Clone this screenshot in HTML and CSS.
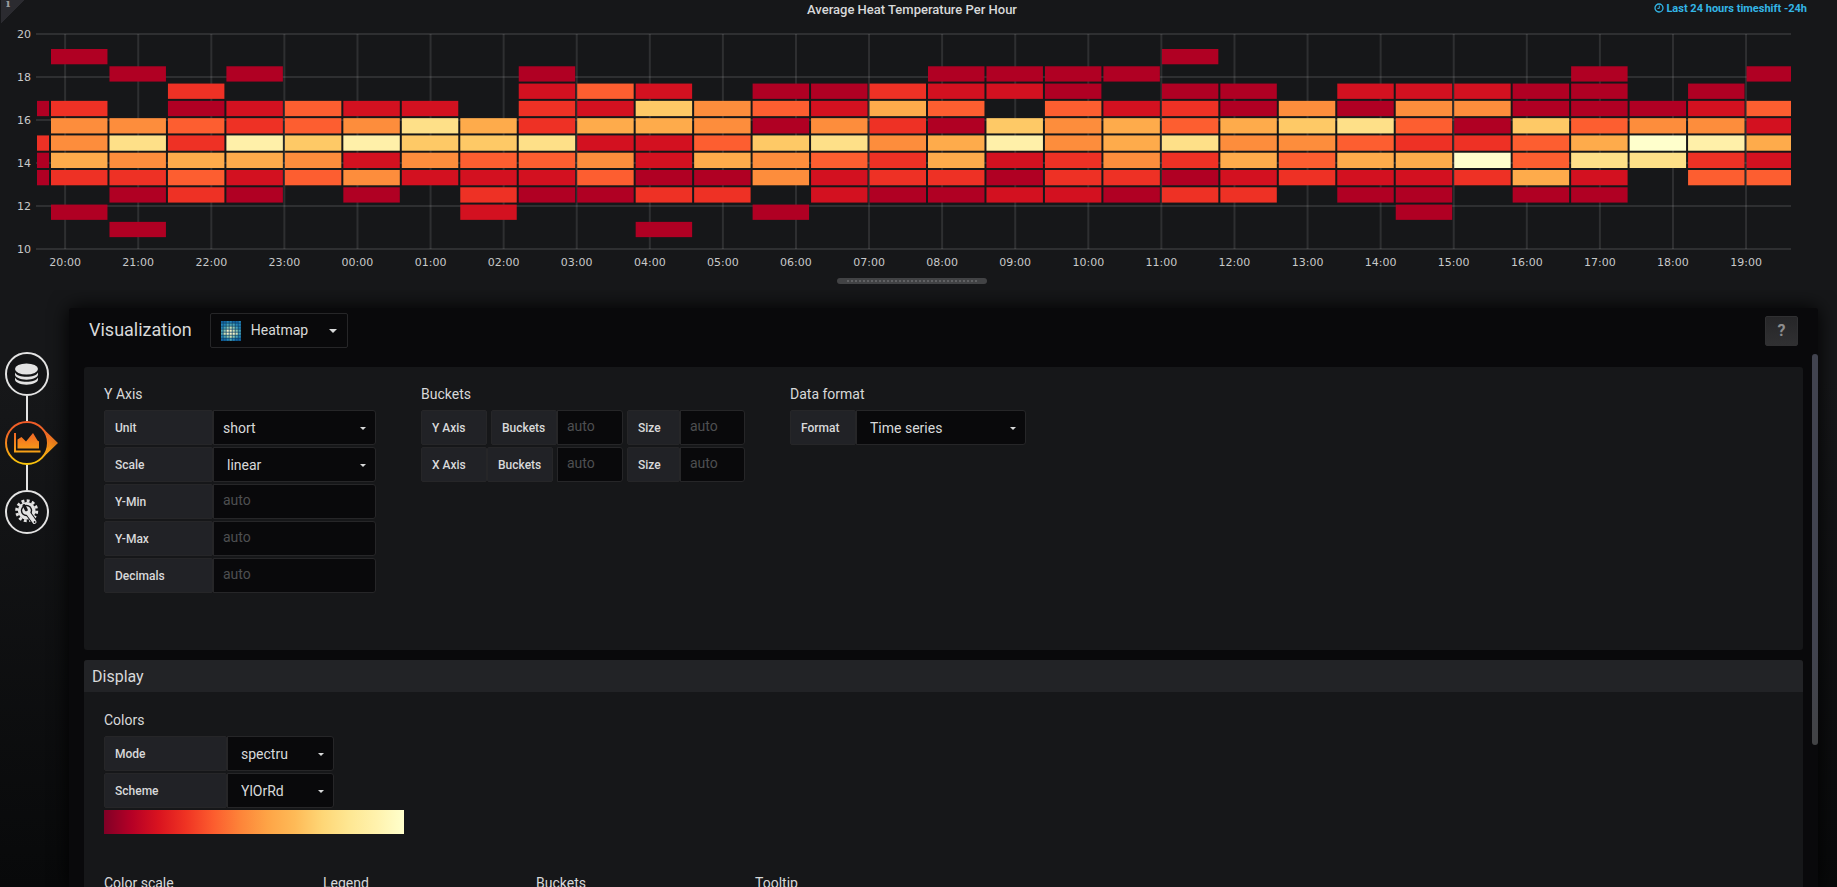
FILE: index.html
```html
<!DOCTYPE html>
<html lang="en">
<head>
<meta charset="utf-8">
<title>Average Heat Temperature Per Hour</title>
<link rel="stylesheet" href="styles.css">
</head>
<body>
<main class="page">
  <section class="panel">
    <span class="panel-corner"><span class="panel-corner-mark">i</span></span>
    <header class="panel-header">
      <h1 class="panel-title">Average Heat Temperature Per Hour</h1>
      <p class="panel-time">
        <svg class="clock" viewBox="0 0 10 10" aria-hidden="true"><circle cx="5" cy="5" r="4" fill="none" stroke="currentColor" stroke-width="1.3"/><path d="M5.3 2.6V5.4H3.4" fill="none" stroke="currentColor"/></svg>
        Last 24 hours timeshift -24h
      </p>
    </header>
    <svg class="chart" id="chart" role="img" aria-label="Heatmap of temperature per hour"></svg>
    <div class="resize-row"><div class="resize-handle"><span class="resize-dots"></span></div></div>
  </section>

  <div class="editor-row">
    <nav class="tabs" aria-label="Panel editor">
      <a class="tab" href="#queries" aria-label="Queries">
        <svg viewBox="0 0 44 44"><circle class="ring" cx="22" cy="22" r="21"/><g class="glyph"><ellipse cx="21.500" cy="17" rx="11.500" ry="5.500"/><path d="M10 20.500c1.500 3 6 4.300 11.500 4.300s10-1.300 11.500-4.300v2c0 2.700-5 5.200-11.500 5.200s-11.500-2.500-11.500-5.200z"/><path d="M10 25.500c1.500 3 6 4.300 11.500 4.300s10-1.300 11.500-4.300v2c0 2.700-5 5.200-11.500 5.200s-11.500-2.500-11.500-5.200z"/></g></svg>
      </a>
      <span class="tab-line"></span>
      <a class="tab" href="#visualization" aria-label="Visualization">
        <svg viewBox="0 0 54 44"><defs><linearGradient id="flame" gradientUnits="userSpaceOnUse" x1="0" y1="0" x2="0" y2="44"><stop offset="0" stop-color="#f05a28"/><stop offset="0.300" stop-color="#f26a25"/><stop offset="1" stop-color="#fbca0a"/></linearGradient></defs><path d="M38 7.500L53 22 38 36.500A22 22 0 0 0 38 7.500z" fill="url(#flame)"/><circle class="ring ring-active" cx="22" cy="22" r="21"/><g fill="url(#flame)"><path d="M9 12h2v17.500h24.500v2H9z"/><path d="M12.500 27.500v-9l4-2.500 4.500 4.500 7-8.500 4.500 7.500 1.500 1v7z"/></g></svg>
      </a>
      <span class="tab-line"></span>
      <a class="tab" href="#general" aria-label="General">
        <svg viewBox="0 0 44 44"><circle class="ring" cx="22" cy="22" r="21"/><circle class="glyph" cx="21.700" cy="20.800" r="8.800"/><circle class="teeth" cx="21.700" cy="20.800" r="10" pathLength="24"/><circle class="hole" cx="21.500" cy="20.500" r="5.700"/><path class="wrench-edge" d="M23 23L29.500 32"/><circle class="glyph" cx="21.500" cy="20.500" r="4.300"/><path class="notch" d="M19 15.500L21.200 19.800"/><path class="wrench" d="M23 23L29.500 32"/><circle class="hole" cx="29.600" cy="32" r="0.900"/></svg>
      </a>
    </nav>

    <section class="editor">
      <header class="editor-header">
        <h2 class="editor-title">Visualization</h2>
        <button class="viz-picker" type="button">
          <svg class="viz-icon" viewBox="0 0 20 20" id="vizIcon" aria-hidden="true"></svg>
          <span class="viz-name">Heatmap</span><span class="caret"></span>
        </button>
        <button class="help" type="button" aria-label="Help">?</button>
      </header>

      <div class="card axes-card">
        <section class="group">
          <h3 class="group-title">Y Axis</h3>
          <div class="field"><label class="label w-109" for="unit">Unit</label><span class="select w-163"><select id="unit"><option>short</option></select></span></div>
          <div class="field"><label class="label w-109" for="scale">Scale</label><span class="select select-inset w-163"><select id="scale"><option>linear</option></select></span></div>
          <div class="field"><label class="label w-109" for="ymin">Y-Min</label><input class="input w-163" id="ymin" type="text" placeholder="auto"></div>
          <div class="field"><label class="label w-109" for="ymax">Y-Max</label><input class="input w-163" id="ymax" type="text" placeholder="auto"></div>
          <div class="field"><label class="label w-109" for="decimals">Decimals</label><input class="input w-163" id="decimals" type="text" placeholder="auto"></div>
        </section>
        <section class="group">
          <h3 class="group-title">Buckets</h3>
          <div class="field">
            <span class="label w-66 gap-after">Y Axis</span>
            <label class="label w-66" for="yb">Buckets</label><input class="input w-66 gap-after" id="yb" type="text" placeholder="auto">
            <label class="label w-53" for="ys">Size</label><input class="input w-65" id="ys" type="text" placeholder="auto">
          </div>
          <div class="field">
            <span class="label w-66">X Axis</span>
            <label class="label w-66 gap-after" for="xb">Buckets</label><input class="input w-66 gap-after" id="xb" type="text" placeholder="auto">
            <label class="label w-53" for="xs">Size</label><input class="input w-65" id="xs" type="text" placeholder="auto">
          </div>
        </section>
        <section class="group">
          <h3 class="group-title">Data format</h3>
          <div class="field"><label class="label w-66" for="format">Format</label><span class="select select-inset w-170"><select id="format"><option>Time series</option></select></span></div>
        </section>
      </div>

      <div class="card display-card">
        <h2 class="card-title">Display</h2>
        <div class="card-body">
          <section>
            <h3 class="group-title">Colors</h3>
            <div class="field"><label class="label w-123" for="mode">Mode</label><span class="select select-inset w-107"><select id="mode"><option>spectru</option></select></span></div>
            <div class="field"><label class="label w-123" for="scheme">Scheme</label><span class="select select-inset w-107"><select id="scheme"><option>YlOrRd</option></select></span></div>
            <div class="scheme-bar"></div>
          </section>
          <div class="more">
            <h3 class="group-title">Color scale</h3>
            <h3 class="group-title">Legend</h3>
            <h3 class="group-title">Buckets</h3>
            <h3 class="group-title">Tooltip</h3>
          </div>
        </div>
      </div>
      <span class="scroll-thumb"></span>
    </section>
  </div>
</main>
<script src="chart.js"></script>
</body>
</html>
```

FILE: styles.css
```css
* { box-sizing: border-box; }

body {
  margin: 0;
  background: #161719;
  color: #d8d9da;
  font-family: Roboto, "Liberation Sans", sans-serif;
  font-size: 14px;
  overflow: hidden;
}

h1, h2, h3, p { margin: 0; font-weight: 400; }

.page {
  display: flex;
  flex-direction: column;
  height: 100vh;
  overflow: hidden;
}

/* Graph panel */
.panel { position: relative; flex: none; }

.panel-corner {
  position: absolute;
  top: 0;
  left: 1px;
  width: 23px;
  height: 23px;
  background: linear-gradient(135deg, #2b2b30 50%, transparent 50%);
}

.panel-corner-mark {
  position: absolute;
  top: -3px;
  left: 5px;
  color: #9a9a9c;
  font: bold 11px/13px "DejaVu Serif", serif;
}

.panel-header {
  display: grid;
  grid-template-columns: 1fr auto 1fr;
  height: 20px;
  padding: 0 30px 0 17px;
}

.panel-title {
  grid-column: 2;
  font-size: 13px;
  font-weight: 500;
  line-height: 20px;
}

.panel-time {
  display: flex;
  align-items: center;
  justify-content: flex-end;
  gap: 2px;
  height: 16px;
  color: #33b5e5;
  font-size: 11px;
  font-weight: 700;
}

.clock { width: 10px; height: 10px; }

.chart { display: block; width: 100%; height: 258px; }

.grid { stroke: #c8c8c8; stroke-opacity: 0.14; stroke-width: 2; }

.tick { fill: #c8c9ca; font: 11px "DejaVu Sans", sans-serif; }

.resize-row {
  display: flex;
  justify-content: center;
  padding-right: 13px;
}

.resize-handle {
  display: flex;
  align-items: center;
  justify-content: center;
  width: 150px;
  height: 6px;
  border-radius: 3px;
  background: #424345;
}

.resize-dots { width: 130px; height: 2px; background: repeating-linear-gradient(90deg, #606163 0 2px, transparent 2px 4px); }

/* Editor */
.editor-row {
  display: flex;
  flex: 1;
  min-height: 0;
  margin-top: 6px;
  padding: 18px 19px 0 0;
  overflow: hidden;
  background: linear-gradient(#161719, #161719 15%, #08090a);
}

.tabs {
  display: flex;
  flex: none;
  flex-direction: column;
  width: 69px;
  padding: 44px 0 0 5px;
}

.tab { height: 44px; }
.tab svg { display: block; height: 44px; }
.ring { fill: #131416; stroke: #e3e3e3; stroke-width: 2; }
.ring-active { stroke: url(#flame); }
.glyph { fill: #e3e3e3; }
.teeth { fill: none; stroke: #e3e3e3; stroke-width: 3; stroke-dasharray: 1.1 0.9; }
.hole { fill: #131416; }
.wrench { stroke: #e3e3e3; stroke-width: 4; stroke-linecap: round; }
.wrench-edge { stroke: #131416; stroke-width: 6; stroke-linecap: round; }
.notch { stroke: #131416; stroke-width: 3; stroke-linecap: round; }
.tab-line { width: 2px; height: 25px; margin-left: 21px; background: #e3e3e3; }

.editor {
  position: relative;
  flex: 1;
  padding: 0 15px;
  border-radius: 3px 3px 0 0;
  background: #09090b;
  box-shadow: 0 0 20px #000;
}

.editor-header {
  display: flex;
  align-items: center;
  height: 59px;
  padding: 5px 5px 19px;
}

.editor-title {
  margin-right: 18px;
  padding-bottom: 2px;
  font-size: 18px;
}

.viz-picker {
  display: flex;
  align-items: center;
  width: 138px;
  height: 35px;
  padding: 0 10px;
  border: 1px solid #262628;
  border-radius: 2px;
  background: #09090b;
  color: #d8d9da;
  font: 14px Roboto, sans-serif;
}

.viz-icon { width: 20px; height: 20px; margin-right: 10px; }

.viz-name { padding-bottom: 2px; }

.caret {
  width: 0;
  margin-left: auto;
  border: 4px solid transparent;
  border-top-color: #d8d9da;
  border-bottom: 0;
}

.help {
  width: 33px;
  height: 30px;
  margin-left: auto;
  padding: 0;
  border: 1px solid #303032;
  border-radius: 2px;
  background: linear-gradient(#262628, #303032);
  color: #8e8e8e;
  font: 700 16px Roboto, sans-serif;
}

.card { border-radius: 3px; background: #161719; }

.axes-card { display: flex; gap: 45px; height: 283px; padding: 17px 20px; }

.group-title { margin-bottom: 6px; font-size: 14px; line-height: 20px; }

.field { display: flex; margin-bottom: 2px; }

.label {
  flex: none;
  height: 35px;
  padding-left: 10px;
  border: 1px solid #262628;
  border-radius: 2px;
  background: #212226;
  font-size: 12px;
  font-weight: 500;
  line-height: 35px;
}

.input, .select {
  height: 35px;
  border: 1px solid #262628;
  border-radius: 0 3px 3px 0;
  background: #09090b;
}

.input {
  padding: 0 9px 3px;
  color: #d8d9da;
  font: 14px Roboto, sans-serif;
}

.input::placeholder { color: #4e4f51; }

.select { position: relative; }

.select select {
  width: 100%;
  height: 33px;
  padding: 0 9px;
  border: 0;
  appearance: none;
  background: transparent;
  color: #d8d9da;
  font: 14px Roboto, sans-serif;
}

.select-inset select { padding-left: 13px; }

.select::after {
  content: "";
  position: absolute;
  top: 16px;
  right: 9px;
  border: 3px solid transparent;
  border-top-color: #d8d9da;
  border-bottom: 0;
}

.w-53 { width: 53px; }
.w-65 { width: 65px; }
.w-66 { width: 66px; }
.w-107 { width: 107px; }
.w-109 { width: 109px; }
.w-123 { width: 123px; }
.w-163 { width: 163px; }
.w-170 { width: 170px; }
.gap-after { margin-right: 4px; }

.display-card { margin-top: 10px; }

.card-title {
  padding: 2px 8px 0;
  border-radius: 3px 3px 0 0;
  background: #222326;
  font-size: 16px;
  line-height: 30px;
}

.card-body { padding: 18px 20px; }

.scheme-bar {
  width: 300px;
  height: 24px;
  background: linear-gradient(90deg, #800026, #b50026, #d9131f, #ef3323, #fc5c2e, #fd8439, #fea446, #feba57, #fed676, #fee793, #fff2ad, #ffffcc);
}

.more {
  display: grid;
  grid-template-columns: 219px 213px 219px 1fr;
  margin-top: 39px;
}

.scroll-thumb {
  position: absolute;
  top: 46px;
  right: 0;
  width: 6px;
  height: 391px;
  border-radius: 3px;
  background: linear-gradient(#41434f 75%, #424345);
}
```

FILE: chart.js
```js
// One string per time bucket, one letter per value bucket from the top down.
const columns = [
  "...A.CAA...", "A..CEEFC.A.", ".A..EHECA.A", "..CADCFDC..", ".A.BCIFBA..",
  "...DDGED...", "...BEIBEA..", "...BHGEB...", "....FGDBCB.", ".ABCCHDBA..",
  "..DBFBEDA..", "..BGFBBAC.A", "...EEDFAC..", "..ADAGEE.A.", "..ABEHDBB..",
  "..CFCECCA..", ".ABDAFFCA..", ".AB.GIBAB..", ".AADEECCB..", ".A.BFFECA..",
  "A.ACDHCAC..", "..AAFEFBC..", "...EGEDC...", "..BAHDFBA..", "..BEDCFBAA.",
  "..BEACJC...", "..AAGDDFA..", ".AAADFHBA..", "...AEJH....", "..ABEICD...",
  ".A.DBFBD..."
];
const colors = {
  A: "#b00023", B: "#d31120", C: "#ee3125", D: "#fd5e30", E: "#fd8d3c",
  F: "#feab4b", G: "#fec966", H: "#fee088", I: "#fff0a9", J: "#ffffcc"
};
const ns = "http://www.w3.org/2000/svg";

function add(parent, name, attrs, text) {
  const node = document.createElementNS(ns, name);
  for (const key in attrs) node.setAttribute(key, attrs[key]);
  if (text) node.textContent = text;
  parent.appendChild(node);
}

function draw() {
  const chart = document.getElementById("chart");
  chart.textContent = "";
  const left = 37;
  const right = chart.clientWidth - 46;
  const hour = (right - left) / 24;
  const firstHour = left + hour * 0.385;
  const top = 14;
  const step = 43;

  for (let i = 0; i < 6; i++) {
    const y = top + step * i;
    add(chart, "line", { class: "grid", x1: left - 1, x2: right, y1: y, y2: y });
    add(chart, "text", { class: "tick", x: 31, y: y + 4, "text-anchor": "end" }, String(20 - 2 * i));
  }
  for (let i = 0; i < 24; i++) {
    const x = firstHour + hour * i;
    add(chart, "line", { class: "grid", x1: x, x2: x, y1: top, y2: top + step * 5 });
    add(chart, "text", { class: "tick", x: x, y: 246, "text-anchor": "middle" },
      String((20 + i) % 24).padStart(2, "0") + ":00");
  }

  const pitch = hour * 0.8;
  const start = left + 14 - pitch;
  const rowPitch = step * 0.402;
  columns.forEach((column, c) => {
    const x = Math.max(left, start + pitch * c);
    const end = Math.min(right, start + pitch * (c + 1) - 2);
    [...column].forEach((letter, r) => {
      if (letter === ".") return;
      add(chart, "rect", {
        x: x, y: 29 + rowPitch * r, width: end - x, height: rowPitch - 2, fill: colors[letter]
      });
    });
  });
}

function drawVizIcon() {
  const icon = document.getElementById("vizIcon");
  const rows = ["1122112", "2233322", "2345432", "3466543", "3566653", "2345432", "1123211"];
  const shades = ["", "#1467a3", "#2484b8", "#4ba3b5", "#8cc5b4", "#c9dfb8", "#f4f3c8"];
  add(icon, "rect", { width: 20, height: 20, fill: "#0b3f66" });
  rows.forEach((row, r) => [...row].forEach((shade, c) => {
    add(icon, "rect", { x: c * 3 - 0.5, y: r * 3 - 0.5, width: 2.3, height: 2.3, fill: shades[shade] });
  }));
}

draw();
drawVizIcon();
window.addEventListener("resize", draw);
```
